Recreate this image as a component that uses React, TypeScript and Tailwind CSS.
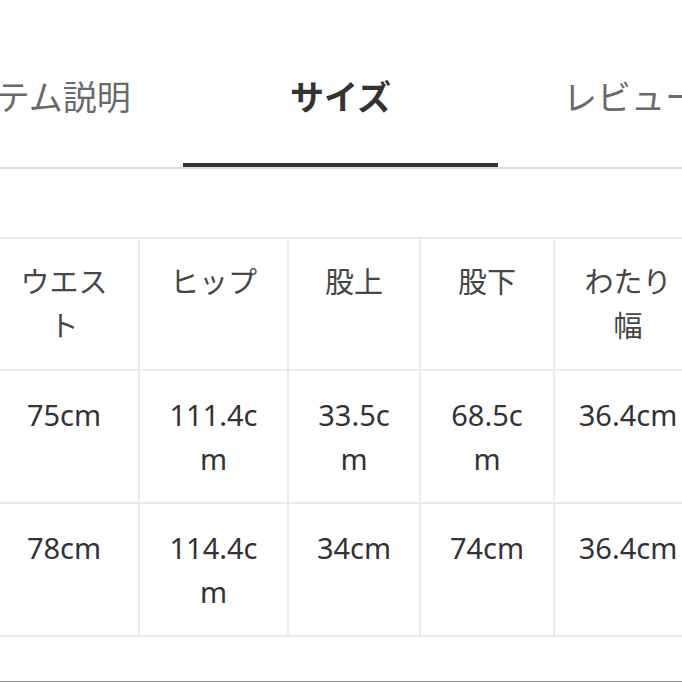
const tabs = [
  { label: "アイテム説明", active: false, align: "justify-center pl-[10px]" },
  { label: "サイズ", active: true, align: "justify-center" },
  { label: "レビュー", active: false, align: "justify-start pl-[65px]" },
];

const columns = ["ウエスト", "ヒップ", "股上", "股下", "わたり幅"];

const rows = [
  ["75cm", "111.4cm", "33.5cm", "68.5cm", "36.4cm"],
  ["78cm", "114.4cm", "34cm", "74cm", "36.4cm"],
];

function Cell({ text, header }: { text: string; header?: boolean }) {
  return (
    <div
      className={`bg-white px-5 text-center text-[29px] leading-[44px] break-all ${
        header ? "py-[21px] text-[#464646]" : "pt-[22px] pb-[21px] text-[#333333]"
      }`}
    >
      {text}
    </div>
  );
}

export default function App() {
  return (
    <div
      className="flex h-[682px] w-[682px] flex-col overflow-hidden bg-white"
      style={{ fontFamily: '"Noto Sans", "Noto Sans CJK JP", sans-serif' }}
    >
      <div className="ml-[-132px] flex w-[945px] shrink-0 border-b-2 border-[#dedede]">
        {tabs.map((tab) => (
          <div
            key={tab.label}
            className={`flex w-[315px] shrink-0 border-b-4 pt-[72px] pb-[43px] text-[34px] leading-[48px] ${tab.align} ${
              tab.active
                ? "border-[#333333] font-bold text-[#333333]"
                : "border-transparent text-[#6a6a6a]"
            }`}
            style={{ fontFamily: '"Noto Sans CJK JP", sans-serif' }}
          >
            {tab.label}
          </div>
        ))}
      </div>

      <div className="mt-[68px] ml-[-12px] grid w-max shrink-0 grid-cols-[148px_147px_130px_132px_146px] gap-[2px] bg-[#ebebeb] p-[2px]">
        {columns.map((label) => (
          <Cell key={label} text={label} header />
        ))}
        {rows.map((row, i) =>
          row.map((value, j) => <Cell key={`${i}-${j}`} text={value} />),
        )}
      </div>

      <div className="flex-1" />
      <div className="h-px shrink-0 bg-[#8a8a8a]" />
    </div>
  );
}
